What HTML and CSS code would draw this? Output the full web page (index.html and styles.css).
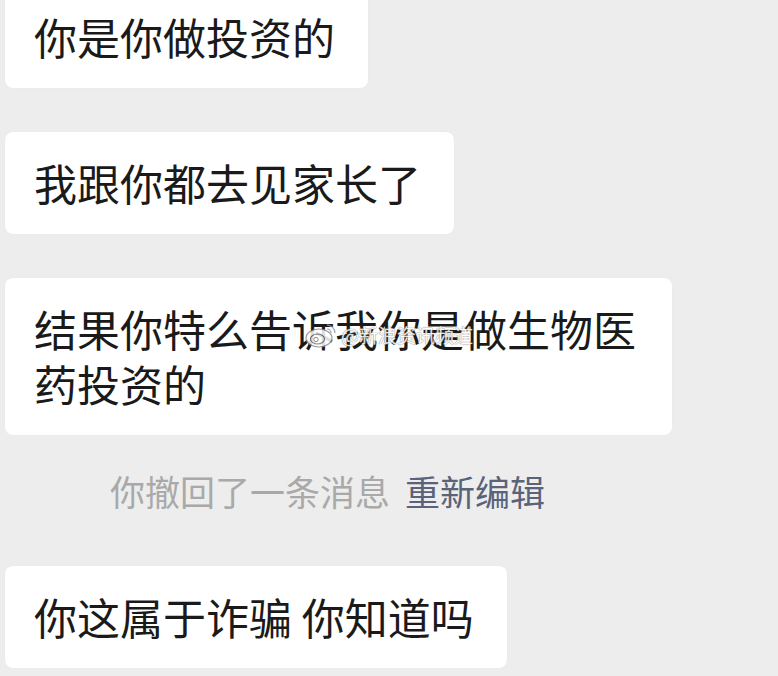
FILE: index.html
```html
<!DOCTYPE html>
<html lang="zh-CN">
<head>
    <meta charset="UTF-8">
    <meta name="viewport" content="width=device-width, initial-scale=1.0">
    <title>聊天记录</title>
    <link rel="stylesheet" href="styles.css">
</head>
<body>
    <div class="chat">
        <div class="msg">
            <div class="bubble">你是你做投资的</div>
        </div>
        <div class="msg">
            <div class="bubble">我跟你都去见家长了</div>
        </div>
        <div class="msg">
            <div class="bubble">结果你特么告诉我你是做生物医药投资的
                <!-- watermark over the text -->
                <div class="watermark">
                    <svg class="wb-logo" width="34" height="28" viewBox="0 0 34 28">
                        <ellipse cx="14" cy="17" rx="13" ry="9" fill="#fff" stroke="#8a8a8a" stroke-width="1.2"/>
                        <ellipse cx="12.5" cy="18" rx="7" ry="5" fill="none" stroke="#777" stroke-width="1.1"/>
                        <circle cx="11" cy="18.5" r="2.2" fill="none" stroke="#777" stroke-width="1"/>
                        <path d="M22 4 A8 8 0 0 1 30 12" fill="none" stroke="#999" stroke-width="1.3"/>
                        <path d="M22 8 A4 4 0 0 1 26 12" fill="none" stroke="#999" stroke-width="1.2"/>
                    </svg>
                    <span class="wb-name">@新浪资讯频道</span>
                </div>
            </div>
        </div>
        <div class="system">你撤回了一条消息<span class="edit">重新编辑</span></div>
        <div class="msg">
            <div class="bubble">你这属于诈骗 你知道吗</div>
        </div>
    </div>
</body>
</html>
```

FILE: styles.css
```css
body {
    margin: 0;
    padding: 0;
    background: #ededed;
    font-family: "Noto Sans CJK SC", "Noto Sans", sans-serif;
    color: #1a1a1a;
    overflow: hidden;
}
.chat {
    margin-top: -14px;
    padding-left: 5px;
    display: flex;
    flex-direction: column;
    align-items: flex-start;
}
.msg {
    margin-bottom: 44px;
}
.bubble {
    position: relative;
    box-sizing: border-box;
    max-width: 667px;
    padding: 23px 33px 24px 29px;
    background: #fff;
    border-radius: 8px;
    font-size: 43px;
    line-height: 55px;
    box-shadow: 0 0 2px rgba(0, 0, 0, 0.04);
}
.bubble.two-line {
    padding-bottom: 20px;
}
.system {
    margin: -10px 0 53px 105px;
    font-size: 35px;
    line-height: 44px;
    color: #a9a9a9;
}
.edit {
    margin-left: 15px;
    color: #5a6379;
}
.watermark {
    position: absolute;
    left: 300px;
    top: 43px;
    display: flex;
    align-items: center;
    gap: 2px;
    opacity: 0.85;
}
.wb-name {
    font-size: 19px;
    line-height: 24px;
    color: #fff;
    text-shadow: 0 0 1px #777, 0 0 1px #777;
}
```
